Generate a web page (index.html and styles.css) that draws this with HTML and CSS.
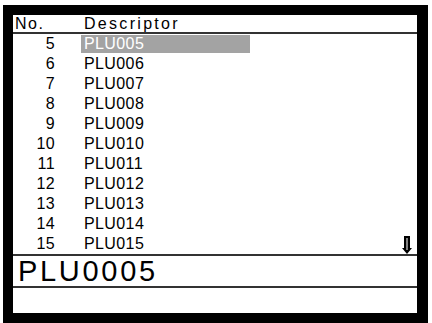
FILE: index.html
```html
<!DOCTYPE html>
<html>
<head>
<meta charset="utf-8">
<link rel="stylesheet" href="styles.css">
</head>
<body>
<div class="screen">
  <div class="head"><span class="num">No.</span><span class="desc">Descriptor</span></div>
  <div class="list">
    <div class="row sel"><span class="num">5</span><span class="desc">PLU005</span></div>
    <div class="row"><span class="num">6</span><span class="desc">PLU006</span></div>
    <div class="row"><span class="num">7</span><span class="desc">PLU007</span></div>
    <div class="row"><span class="num">8</span><span class="desc">PLU008</span></div>
    <div class="row"><span class="num">9</span><span class="desc">PLU009</span></div>
    <div class="row"><span class="num">10</span><span class="desc">PLU010</span></div>
    <div class="row"><span class="num">11</span><span class="desc">PLU011</span></div>
    <div class="row"><span class="num">12</span><span class="desc">PLU012</span></div>
    <div class="row"><span class="num">13</span><span class="desc">PLU013</span></div>
    <div class="row"><span class="num">14</span><span class="desc">PLU014</span></div>
    <div class="row"><span class="num">15</span><span class="desc">PLU015</span>
      <svg class="arrow" width="10" height="18" viewBox="0 0 10 18"><path d="M2 0h6v12h2l-5 6-5-6h2z" fill="#000"/><path d="M5 2v12" stroke="#fff" stroke-width="1"/></svg>
    </div>
  </div>
  <div class="entry">PLU0005</div>
  <div class="foot"></div>
</div>
</body>
</html>
```
FILE: styles.css
```css
html, body {
  margin: 0;
  padding: 0;
  background: #fff;
}
body {
  width: 432px;
  height: 323px;
  overflow: hidden;
  font-family: "Liberation Sans", Arial, sans-serif;
  color: #000;
}
.screen {
  margin: 5px 0 0 3px;
  width: 404px;
  height: 298px;
  border: 10px solid #000;
  border-right-width: 11px;
  display: flex;
  flex-direction: column;
  background: #fff;
}
.head {
  height: 17px;
  border-bottom: 2px solid #333;
  display: flex;
  align-items: center;
  font-size: 16px;
  letter-spacing: 1.5px;
}
.head .num {
  width: 42px;
  padding-left: 2px;
  box-sizing: border-box;
}
.head .desc {
  margin-left: 29px;
  letter-spacing: 2.3px;
}
.list {
  height: 220px;
  border-bottom: 2px solid #333;
  display: flex;
  flex-direction: column;
}
.row {
  height: 20px;
  display: flex;
  align-items: center;
  font-size: 16px;
  letter-spacing: 0.4px;
}
.row .num {
  width: 42px;
  text-align: right;
}
.row .desc {
  margin-left: 26px;
  padding-left: 3px;
  width: 166px;
  height: 18px;
  line-height: 18px;
}
.row.sel .desc {
  background: #a3a3a3;
  color: #fff;
}
.arrow {
  margin-left: auto;
  margin-right: 5px;
  margin-top: 2px;
}
.entry {
  height: 30px;
  border-bottom: 2px solid #333;
  font-size: 29px;
  line-height: 30px;
  letter-spacing: 2.7px;
  padding-left: 5px;
}
.foot {
  flex: 1;
}
```
